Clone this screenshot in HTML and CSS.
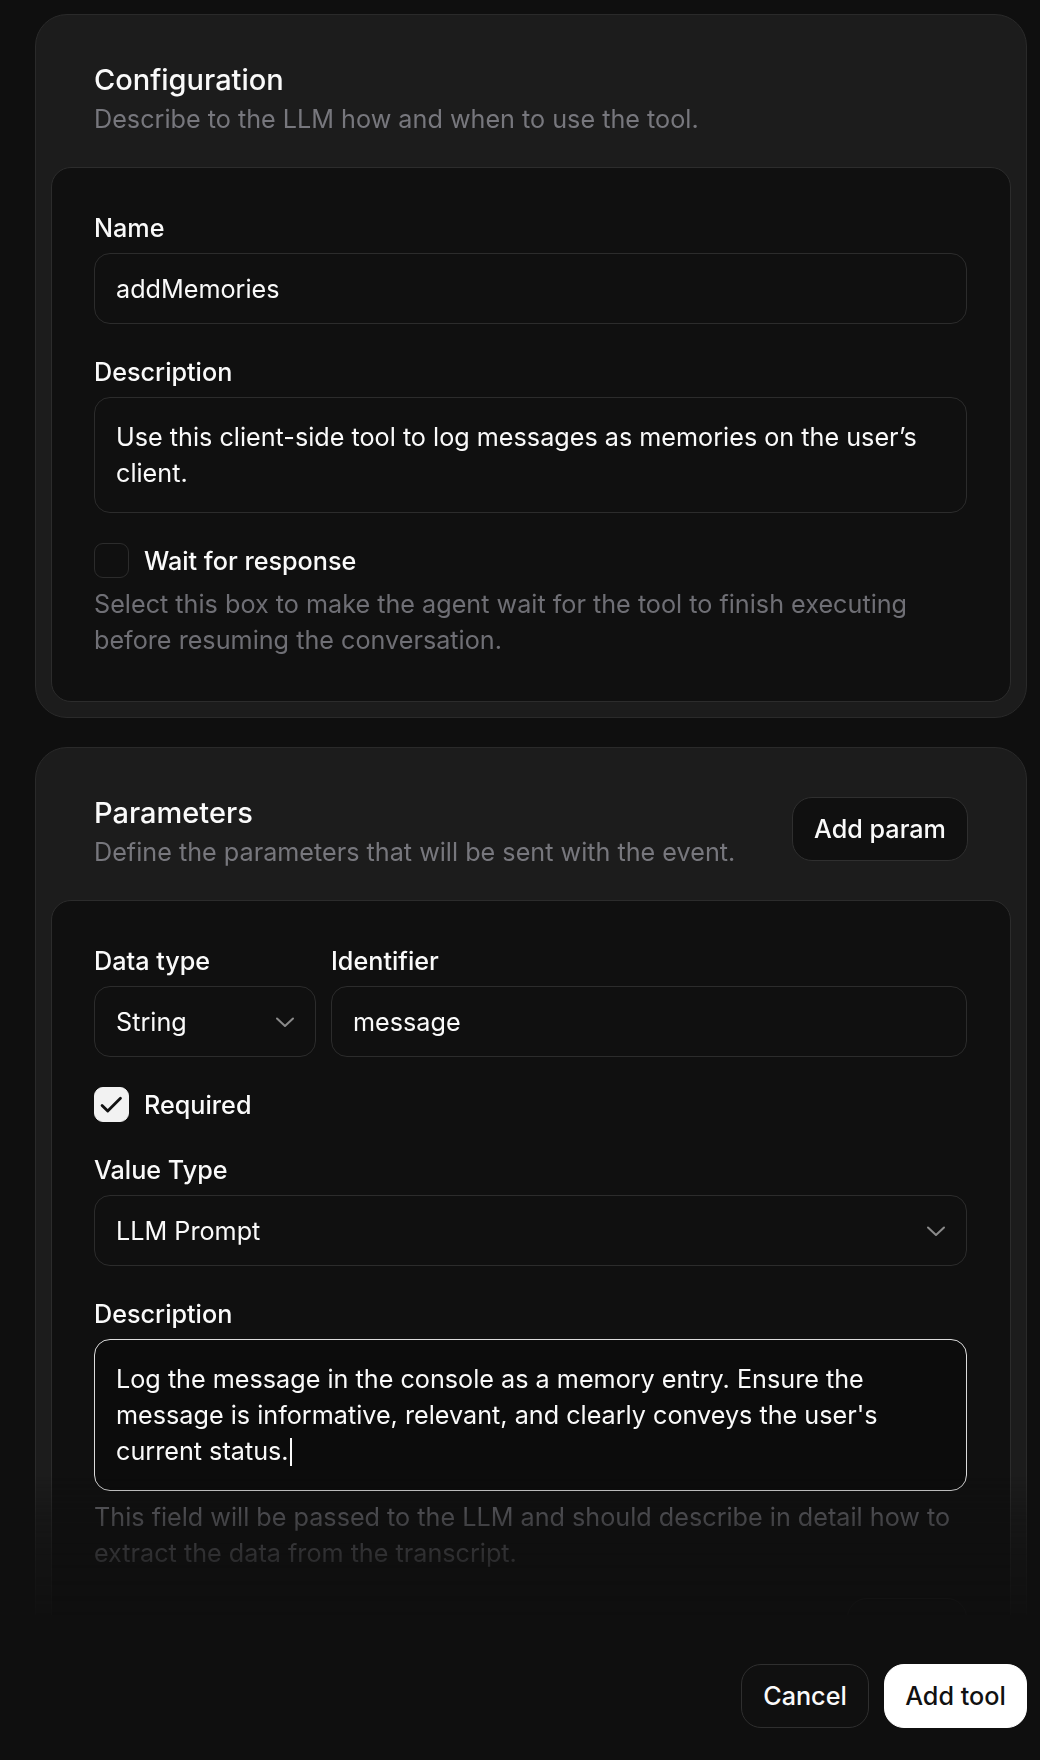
FILE: index.html
```html
<!DOCTYPE html>
<html lang="en">
<head>
<meta charset="utf-8">
<title>Add tool</title>
<link rel="stylesheet" href="styles.css">
</head>
<body>
<div class="modal">
  <div class="scroll">
    <section class="card">
      <header class="card-head">
        <div class="head-text">
          <h2 class="card-title">Configuration</h2>
          <p class="card-sub">Describe to the LLM how and when to use the tool.</p>
        </div>
      </header>
      <div class="card-body">
        <div class="field">
          <label class="label">Name</label>
          <div class="input">addMemories</div>
        </div>
        <div class="field">
          <label class="label">Description</label>
          <div class="textarea">Use this client-side tool to log messages as memories on the user’s client.</div>
        </div>
        <div class="field">
          <div class="check-row">
            <span class="checkbox"></span>
            <span class="check-label">Wait for response</span>
          </div>
          <p class="helper">Select this box to make the agent wait for the tool to finish executing before resuming the conversation.</p>
        </div>
      </div>
    </section>

    <section class="card">
      <header class="card-head">
        <div class="head-text">
          <h2 class="card-title">Parameters</h2>
          <p class="card-sub">Define the parameters that will be sent with the event.</p>
        </div>
        <button class="btn btn-dark">Add param</button>
      </header>
      <div class="card-body">
        <div class="pair">
          <div class="pair-col">
            <label class="label">Data type</label>
            <div class="input select">
              <span>String</span>
              <svg class="chev" width="18" height="10" viewBox="0 0 18 10"><polyline points="1,1.5 9,9 17,1.5" fill="none" stroke="#8a8a8a" stroke-width="2" stroke-linecap="round" stroke-linejoin="round"/></svg>
            </div>
          </div>
          <div class="pair-col">
            <label class="label">Identifier</label>
            <div class="input">message</div>
          </div>
        </div>
        <div class="check-row">
          <span class="checkbox checked">
            <svg width="35" height="35" viewBox="0 0 35 35"><polyline points="7.5,18.5 13.5,24.5 27,11" fill="none" stroke="#111" stroke-width="3" stroke-linecap="round" stroke-linejoin="round"/></svg>
          </span>
          <span class="check-label">Required</span>
        </div>
        <div class="field">
          <label class="label">Value Type</label>
          <div class="input select">
            <span>LLM Prompt</span>
            <svg class="chev" width="18" height="10" viewBox="0 0 18 10"><polyline points="1,1.5 9,9 17,1.5" fill="none" stroke="#8a8a8a" stroke-width="2" stroke-linecap="round" stroke-linejoin="round"/></svg>
          </div>
        </div>
        <div class="field">
          <label class="label">Description</label>
          <div class="textarea focused">Log the message in the console as a memory entry. Ensure the message is informative, relevant, and clearly conveys the user's current status.<span class="caret"></span></div>
          <p class="helper">This field will be passed to the LLM and should describe in detail how to extract the data from the transcript.</p>
        </div>
        <div class="row-end">
          <button class="btn btn-dark btn-ghost" aria-label="Remove parameter"></button>
        </div>
      </div>
    </section>
  </div>

  <footer class="actions">
    <button class="btn btn-dark btn-cancel">Cancel</button>
    <button class="btn btn-light">Add tool</button>
  </footer>
</div>
</body>
</html>
```

FILE: styles.css
```css
* { box-sizing: border-box; }

html, body {
  margin: 0;
  padding: 0;
  background: #0f0f0f;
}

body {
  font-family: Inter, "Noto Sans", "Liberation Sans", sans-serif;
  color: #fafafa;
  font-size: 25.2px;
  line-height: 36px;
}

.modal {
  width: 1040px;
  height: 1760px;
  display: flex;
  flex-direction: column;
}

.scroll {
  height: 1615px;
  overflow: hidden;
  padding: 14px 13px 0 35px;
  display: flex;
  flex-direction: column;
  gap: 29px;
  -webkit-mask-image: linear-gradient(to bottom, #000 calc(100% - 140px), rgba(0,0,0,0.55) calc(100% - 95px), rgba(0,0,0,0.3) calc(100% - 55px), rgba(0,0,0,0.08) 100%);
  mask-image: linear-gradient(to bottom, #000 calc(100% - 140px), rgba(0,0,0,0.55) calc(100% - 95px), rgba(0,0,0,0.3) calc(100% - 55px), rgba(0,0,0,0.08) 100%);
}

.card {
  flex-shrink: 0;
  background: #1c1c1c;
  border: 1px solid #2a2a2a;
  border-radius: 32px;
  padding: 0 15px 15px;
}

.card-head {
  display: flex;
  align-items: center;
  justify-content: space-between;
  padding: 41px 43px 25px 43px;
  height: 152px;
}

.card-title {
  margin: 0 0 6px;
  font-size: 29px;
  line-height: 34px;
  font-weight: 500;
  color: #fafafa;
}

.card-sub {
  margin: 0;
  font-size: 25.2px;
  line-height: 32px;
  color: #77777d;
}

.card-body {
  background: #101010;
  border: 1px solid #2c2c2c;
  border-radius: 20px;
  padding: 42px 43px 43px 42px;
  display: flex;
  flex-direction: column;
  gap: 30px;
}

.field {
  display: flex;
  flex-direction: column;
}

.label {
  font-weight: 500;
  margin-bottom: 7px;
  line-height: 36px;
}

.input {
  height: 71px;
  border: 1px solid #2c2c2c;
  border-radius: 16px;
  background: #101010;
  padding: 0 21px;
  display: flex;
  align-items: center;
  color: #fafafa;
}

.select {
  justify-content: space-between;
}

.chev {
  display: block;
  flex-shrink: 0;
}

.textarea {
  border: 1px solid #2c2c2c;
  border-radius: 16px;
  background: #101010;
  padding: 21px 21px;
  color: #fafafa;
}

.textarea.focused {
  border-color: #dcdcdc;
  background: #0c0c0c;
}

.caret {
  display: inline-block;
  width: 2px;
  height: 28px;
  background: #fafafa;
  vertical-align: -6px;
  margin-left: 1px;
}

.check-row {
  display: flex;
  align-items: center;
  gap: 15px;
  height: 35px;
}

.checkbox {
  width: 35px;
  height: 35px;
  border: 1px solid #2c2c2c;
  border-radius: 9px;
  flex-shrink: 0;
  display: flex;
  align-items: center;
  justify-content: center;
}

.checkbox.checked {
  background: #f2f2f2;
  border-color: #f2f2f2;
}

.checkbox svg {
  display: block;
}

.check-label {
  font-weight: 500;
}

.helper {
  margin: 8px 0 0;
  color: #6f6f75;
}

.pair {
  display: grid;
  grid-template-columns: 222px 1fr;
  column-gap: 15px;
}

.pair-col {
  display: flex;
  flex-direction: column;
}

.btn {
  font-family: inherit;
  font-size: 25.2px;
  font-weight: 500;
  height: 64px;
  border-radius: 20px;
  padding: 0 23px;
  cursor: pointer;
}

.btn-dark {
  background: #101010;
  color: #fafafa;
  border: 1px solid #2f2f2f;
}

.card-head .btn-dark {
  width: 176px;
  flex-shrink: 0;
  padding: 0;
  margin-top: -6px;
}

.btn-light {
  background: #ffffff;
  color: #111111;
  border: 1px solid #ffffff;
  width: 143px;
  padding: 0;
}

.btn-cancel {
  width: 128px;
  padding: 0;
}

.row-end {
  display: flex;
  justify-content: flex-end;
  margin-top: -3px;
}

.btn-ghost {
  width: 120px;
  padding: 0;
}

.actions {
  display: flex;
  justify-content: flex-end;
  gap: 15px;
  padding: 49px 13px 0 0;
}
```
